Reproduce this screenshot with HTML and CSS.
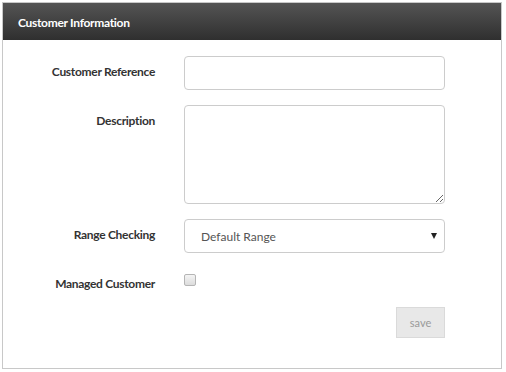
FILE: index.html
```html
<!DOCTYPE html>
<html>
<head>
<meta charset="utf-8">
<link rel="stylesheet" href="styles.css">
</head>
<body>
<div class="panel">
  <div class="panel-heading">Customer Information</div>
  <form class="panel-body">
    <label class="lbl" for="ref">Customer Reference</label>
    <input class="ctl" id="ref" type="text">
    <label class="lbl" for="desc">Description</label>
    <textarea class="ctl area" id="desc"></textarea>
    <label class="lbl" for="range">Range Checking</label>
    <div class="select-wrap">
      <select class="ctl sel" id="range"><option>Default Range</option></select>
      <span class="caret"></span>
    </div>
    <label class="lbl" for="managed">Managed Customer</label>
    <div class="check-cell"><input class="chk" id="managed" type="checkbox"></div>
    <div class="actions"><button type="button" class="btn-save">save</button></div>
  </form>
</div>
</body>
</html>
```
FILE: styles.css
```css
html, body { margin: 0; padding: 0; background: #fff; }
body { font-family: Lato, "Noto Sans", "Liberation Sans", sans-serif; }
.panel {
  margin: 2px 0 0 2px;
  width: 498px;
  height: 365px;
  border: 1px solid #c8c8c8;
  box-sizing: content-box;
}
.panel-heading {
  height: 37px;
  box-sizing: border-box;
  padding: 1px 0 0 15px;
  background: linear-gradient(#545454, #2f2f2f);
  color: #fff;
  font-weight: 700;
  font-size: 12px;
  line-height: 37px;
  letter-spacing: -0.3px;
}
.panel-body {
  display: grid;
  grid-template-columns: 152px 261px;
  column-gap: 29px;
  row-gap: 15px;
  padding: 16px 0 0 0;
  margin: 0;
}
.lbl {
  text-align: right;
  font-weight: 700;
  font-size: 12px;
  color: #333;
  line-height: 17px;
  padding-top: 7px;
  letter-spacing: -0.3px;
}
.ctl {
  box-sizing: border-box;
  width: 261px;
  height: 34px;
  border: 1px solid #ccc;
  border-radius: 4px;
  background: #fff;
  margin: 0;
  font-family: inherit;
}
.area { height: 99px; resize: vertical; display: block; }
.select-wrap { position: relative; }
.sel {
  appearance: none;
  -webkit-appearance: none;
  padding: 0 0 0 16px;
  font-size: 12px;
  color: #555;
  display: block;
}
.caret {
  position: absolute;
  right: 8px;
  top: 14px;
  width: 0; height: 0;
  border-left: 3.5px solid transparent;
  border-right: 3.5px solid transparent;
  border-top: 6px solid #222;
}
.check-cell { height: 24px; padding-top: 6px; box-sizing: border-box; }
.chk {
  appearance: none;
  -webkit-appearance: none;
  display: block;
  width: 12px; height: 12px;
  margin: 0;
  border: 1px solid #b5b5b5;
  border-radius: 2px;
  background: linear-gradient(#f4f4f4, #dcdcdc);
}
.actions {
  grid-column: 2;
  display: flex;
  justify-content: flex-end;
}
.btn-save {
  width: 49px; height: 31px;
  background: #e8e8e8;
  border: 1px solid #dadada;
  color: #9a9a9a;
  font-family: inherit;
  font-size: 11px;
  padding: 0;
  border-radius: 0;
}
```
